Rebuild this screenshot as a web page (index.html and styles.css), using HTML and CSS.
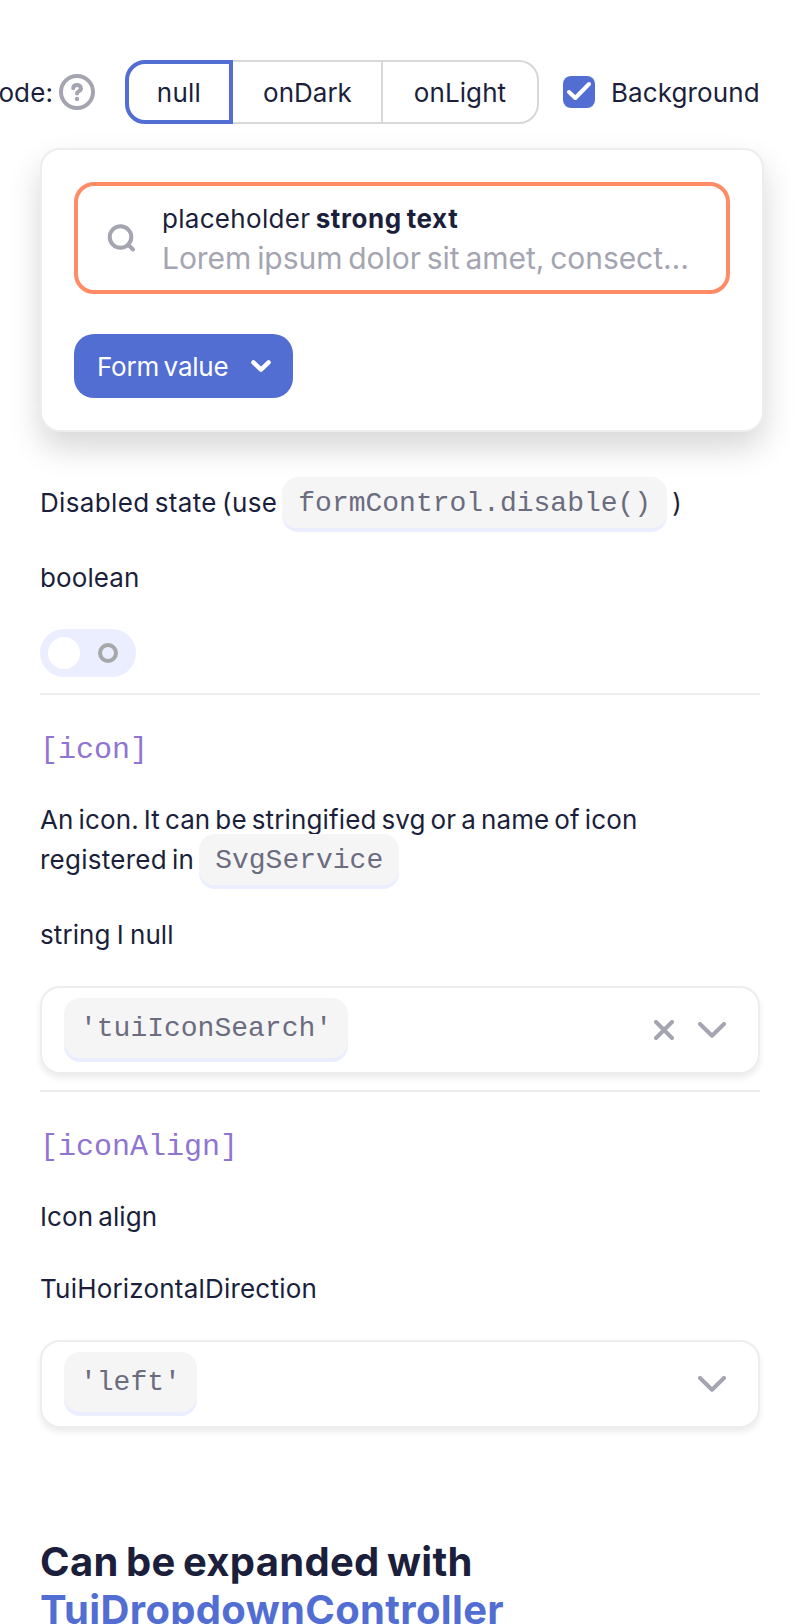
FILE: index.html
```html
<!DOCTYPE html>
<html lang="en">
<head>
<meta charset="utf-8">
<title>API documentation</title>
<link rel="stylesheet" href="styles.css">
</head>
<body>
<main class="page">
  <div class="modes">
    <span class="modes-label">Mode:</span>
    <svg class="help" width="36" height="36" viewBox="0 0 36 36" fill="none" stroke="#a4a5b1" stroke-width="4" stroke-linecap="round"><circle cx="18" cy="18" r="16"/><path d="M14.2 14.2a3.8 3.3 0 1 1 5.6 3c-1.2.6-1.8 1-1.8 2.3" stroke-width="4"/><circle cx="18" cy="24.9" r="2.2" fill="#a4a5b1" stroke="none"/></svg>
    <div class="segments">
      <div class="segment segment-active"><span class="s-null">null</span></div>
      <div class="segment segment-dark"><span class="s-dark">onDark</span></div>
      <div class="segment segment-light"><span class="s-light">onLight</span></div>
    </div>
    <svg class="checkbox" width="32" height="32" viewBox="0 0 32 32" fill="none"><rect width="32" height="32" rx="8" fill="#526ed3"/><path d="M6 16l6.3 6L26 8" stroke="#fff" stroke-width="4" stroke-linecap="round" stroke-linejoin="round"/></svg>
    <span class="s-bg">Background</span>
  </div>

  <section class="card">
    <div class="field">
      <svg class="search" width="30" height="30" viewBox="0 0 30 30" fill="none" stroke="#a4a5b1" stroke-width="4" stroke-linecap="round"><circle cx="13.5" cy="14" r="10.8"/><path d="M21.8 22.3l4.2 4.2"/></svg>
      <div class="field-text">
        <div class="field-label"><span class="s-ph">placeholder</span> <b class="s-strong">strong text</b></div>
        <div class="field-hint"><span class="s-lorem">Lorem ipsum dolor sit amet, consect…</span></div>
      </div>
    </div>
    <button class="form-button"><span class="s-form">Form value</span><svg width="20" height="13" viewBox="0 0 20 13" fill="none" stroke="#fff" stroke-width="4.4" stroke-linecap="round" stroke-linejoin="round"><path d="M2.4 2.4L10 9.6l7.6-7.2"/></svg></button>
  </section>

  <section class="property first">
    <p class="text"><span class="s-dis">Disabled state (use</span> <code class="code">formControl.disable()</code> )</p>
    <p class="text type-bool"><span class="s-bool">boolean</span></p>
    <div class="toggle"><i class="knob"></i><i class="ring"></i></div>
  </section>

  <section class="property">
    <h3 class="name">[icon]</h3>
    <p class="text desc"><span class="s-an">An icon. It can be stringified svg or a name of icon</span><br><span class="s-reg">registered in</span> <code class="code">SvgService</code></p>
    <p class="text type"><span class="s-str">string I null</span></p>
    <div class="select">
      <code class="value">'tuiIconSearch'</code>
      <svg class="clear" width="20" height="20" viewBox="0 0 20 20" stroke="#a4a5b1" stroke-width="4" stroke-linecap="round"><path d="M2 2l16 16M18 2L2 18"/></svg>
      <svg class="chevron" width="28" height="16" viewBox="0 0 28 16" fill="none" stroke="#a4a5b1" stroke-width="4" stroke-linecap="round" stroke-linejoin="round"><path d="M2 2l12 11.8L26 2"/></svg>
    </div>
  </section>

  <section class="property">
    <h3 class="name">[iconAlign]</h3>
    <p class="text desc"><span class="s-ia">Icon align</span></p>
    <p class="text type-align"><span class="s-tui">TuiHorizontalDirection</span></p>
    <div class="select">
      <code class="value">'left'</code>
      <svg class="chevron" width="28" height="16" viewBox="0 0 28 16" fill="none" stroke="#a4a5b1" stroke-width="4" stroke-linecap="round" stroke-linejoin="round"><path d="M2 2l12 11.8L26 2"/></svg>
    </div>
  </section>

  <h2 class="heading"><span class="s-can">Can be expanded with</span><br><a class="s-drop">TuiDropdownController</a></h2>
</main>
</body>
</html>
```
FILE: styles.css
```css
* { box-sizing: border-box; }
body { margin: 0; background: #fff; }
.page {
  height: 1624px;
  overflow: hidden;
  padding: 60px 36px 0 40px;
  font: 26px/40px Inter, "Liberation Sans", sans-serif;
  color: #1b1f3b;
  letter-spacing: .1px;
}
svg { display: block; flex: none; }
p, h2, h3 { margin: 0; font-weight: 400; }
span, b, a { white-space: nowrap; }

.modes {
  display: flex;
  align-items: center;
  justify-content: flex-end;
  height: 64px;
  margin-right: 4px;
}
.modes > * { flex: none; }
.modes span { padding-top: 2px; }
.modes-label { margin-right: 6px; }
.help { margin-right: 30px; }
.segments { display: flex; height: 64px; margin-right: 24px; }
.segment {
  display: flex;
  align-items: center;
  justify-content: center;
  border: 2px solid #d7d7d7;
  border-left: 0;
}
.segment-active { width: 108px; border: 4px solid #526ed3; border-radius: 20px 0 0 20px; }
.segment-dark { width: 150px; padding-left: 1px; }
.segment-light { width: 156px; border-radius: 0 20px 20px 0; }
.checkbox { margin-right: 16px; }
.s-bg { width: 149px; }
.s-null { letter-spacing: .25px; }
.s-dark { letter-spacing: 0; }

.card {
  width: 724px;
  height: 284px;
  margin-top: 24px;
  padding: 32px;
  border: 2px solid #ededed;
  border-radius: 20px;
  box-shadow: 0 16px 32px rgba(0, 0, 0, .16);
  background: #fff;
}
.field {
  display: flex;
  align-items: center;
  height: 112px;
  border: 4px solid #ff8c67;
  border-radius: 20px;
  padding-left: 29px;
}
.search { margin-right: 25px; }
.field-text { padding-top: 2px; }
.field-label { height: 38px; line-height: 38px; word-spacing: -2px; }
.field-hint { font-size: 30px; color: #a4a5b1; }
.s-ph { letter-spacing: .3px; }
.s-strong { letter-spacing: .6px; }
.s-lorem { letter-spacing: -.05px; word-spacing: -2.5px; }
.form-button {
  display: flex;
  align-items: center;
  justify-content: space-between;
  width: 219px;
  height: 64px;
  margin-top: 40px;
  padding: 0 22px 0 23px;
  border: 0;
  border-radius: 20px;
  background: #526ed3;
  color: #fff;
  font: inherit;
}
.s-form { padding-top: 2px; letter-spacing: -.2px; word-spacing: -2.6px; }

.property { width: 720px; padding-top: 33px; }
.property + .property { margin-top: 16px; border-top: 2px solid #ededed; }
.first { padding-top: 51px; }
.text { word-spacing: -2.4px; }
.s-dis { letter-spacing: .35px; }
.s-an { letter-spacing: .14px; word-spacing: -2.5px; }
.s-reg { letter-spacing: .25px; }
.s-str { word-spacing: -1.3px; }
.s-tui { letter-spacing: .2px; }
.code, .name, .value { font-family: "Liberation Mono", monospace; letter-spacing: 0; }
.code {
  padding: 11px 16px 9px;
  border-radius: 16px;
  background: #f5f5f5;
  box-shadow: 0 4px #ebeeff;
  color: #6b6c80;
  font-size: 28px;
  line-height: 1;
  vertical-align: 1px;
}
.type-bool { margin-top: 35px; }
.toggle {
  display: flex;
  align-items: center;
  justify-content: space-between;
  width: 96px;
  height: 48px;
  margin-top: 31px;
  padding: 0 18px 0 8px;
  border-radius: 24px;
  background: #ebeeff;
}
.knob { width: 32px; height: 32px; border-radius: 50%; background: #fff; }
.ring { width: 20px; height: 20px; border: 4px solid #a6a7a9; border-radius: 50%; }
.name { height: 44px; line-height: 44px; font-size: 30px; color: #8f75d1; }
.desc { margin-top: 28px; }
.type { margin-top: 35px; }
.type-align { margin-top: 32px; }
.select {
  display: flex;
  align-items: center;
  height: 88px;
  margin-top: 31px;
  padding: 0 32px 0 22px;
  border: 2px solid #ededed;
  border-radius: 20px;
  box-shadow: 0 4px 6px rgba(0, 0, 0, .08);
}
.value {
  height: 60px;
  margin: 0 auto 4px 0;
  padding: 0 16px;
  border-radius: 16px;
  background: #f5f5f5;
  box-shadow: 0 4px #ebeeff;
  color: #6b6c80;
  font-size: 28px;
  line-height: 62px;
}
.clear { margin-right: 24px; }
.heading {
  margin-top: 110px;
  font-size: 40px;
  font-weight: 700;
  line-height: 48px;
}
.s-can { letter-spacing: .3px; word-spacing: -2.4px; }
.s-drop { color: #526ed3; letter-spacing: .34px; }
```
